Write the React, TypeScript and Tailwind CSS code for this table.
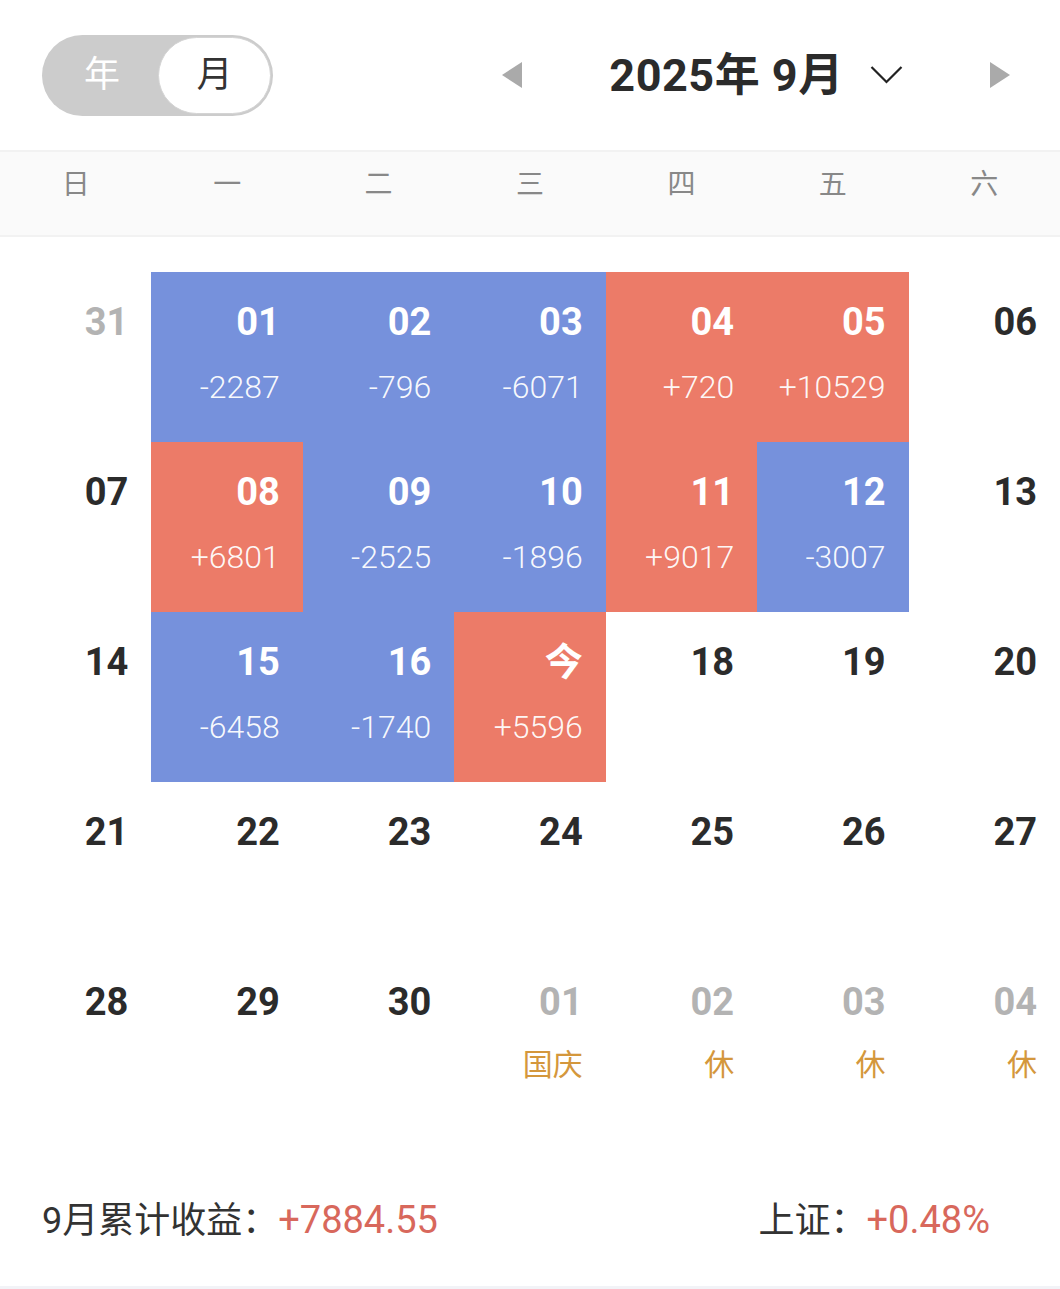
import clsx from 'clsx';

type Cell = {
  day: string;
  tone?: 'up' | 'down';
  amount?: string;
  muted?: boolean;
  holiday?: string;
};

const weeks: Cell[][] = [
  [
    { day: '31', muted: true },
    { day: '01', tone: 'down', amount: '-2287' },
    { day: '02', tone: 'down', amount: '-796' },
    { day: '03', tone: 'down', amount: '-6071' },
    { day: '04', tone: 'up', amount: '+720' },
    { day: '05', tone: 'up', amount: '+10529' },
    { day: '06' },
  ],
  [
    { day: '07' },
    { day: '08', tone: 'up', amount: '+6801' },
    { day: '09', tone: 'down', amount: '-2525' },
    { day: '10', tone: 'down', amount: '-1896' },
    { day: '11', tone: 'up', amount: '+9017' },
    { day: '12', tone: 'down', amount: '-3007' },
    { day: '13' },
  ],
  [
    { day: '14' },
    { day: '15', tone: 'down', amount: '-6458' },
    { day: '16', tone: 'down', amount: '-1740' },
    { day: '今', tone: 'up', amount: '+5596' },
    { day: '18' },
    { day: '19' },
    { day: '20' },
  ],
  [
    { day: '21' },
    { day: '22' },
    { day: '23' },
    { day: '24' },
    { day: '25' },
    { day: '26' },
    { day: '27' },
  ],
  [
    { day: '28' },
    { day: '29' },
    { day: '30' },
    { day: '01', muted: true, holiday: '国庆' },
    { day: '02', muted: true, holiday: '休' },
    { day: '03', muted: true, holiday: '休' },
    { day: '04', muted: true, holiday: '休' },
  ],
];

const weekdays = ['日', '一', '二', '三', '四', '五', '六'];

const DayCell = ({ cell }: { cell: Cell }) => (
  <div
    className={clsx(
      'h-[170px] flex flex-col items-end pr-[23px] pt-[31px]',
      cell.tone === 'up' && 'bg-[#ec7b68] text-white',
      cell.tone === 'down' && 'bg-[#7691dc] text-white',
      !cell.tone && (cell.muted ? 'text-[#b3b3b3]' : 'text-[#2b2b2b]')
    )}
  >
    <span className="text-[38px] leading-[38px] font-bold">{cell.day}</span>
    {cell.amount && (
      <span className="mt-[30px] text-[32px] leading-[32px] font-light text-white/95">{cell.amount}</span>
    )}
    {cell.holiday && (
      <span className="mt-[29px] text-[30px] leading-[30px] text-[#d4973c]">{cell.holiday}</span>
    )}
  </div>
);

export default function App() {
  return (
    <div className="w-[1060px] bg-white font-['Roboto','Noto_Sans_CJK_SC',sans-serif]">
      {/* Top bar: year/month toggle + month switcher */}
      <div className="h-[150px] flex items-center pl-[42px] pr-[50px]">
        <div className="w-[231px] h-[81px] rounded-full bg-[#cccccc] flex items-center p-[2px]">
          <span className="flex-1 text-center text-[36px] text-white pl-[2px]">年</span>
          <span className="w-[113px] h-[77px] rounded-full bg-white border border-[#d4d4d4] flex items-center justify-center text-[36px] text-[#333]">
            月
          </span>
        </div>

        <div className="ml-auto w-[508px] flex items-center justify-between">
          <svg width="20" height="26" viewBox="0 0 20 26">
            <polygon points="20,0 20,26 0,13" fill="#aaaaaa" />
          </svg>
          <div className="flex items-center">
            <span className="text-[45px] leading-none font-bold text-[#2b2b2b] tracking-[0.5px]">2025年 9月</span>
            <svg className="ml-[26px]" width="33" height="20" viewBox="0 0 33 20">
              <polyline points="1.5,2 16.5,17 31.5,2" fill="none" stroke="#222" strokeWidth="2.2" />
            </svg>
          </div>
          <svg width="20" height="26" viewBox="0 0 20 26">
            <polygon points="0,0 0,26 20,13" fill="#aaaaaa" />
          </svg>
        </div>
      </div>

      {/* Weekday header */}
      <div className="h-[87px] grid grid-cols-7 items-start pt-[19px] bg-[#fafafa] border-y-2 border-[#f2f2f2]">
        {weekdays.map((w) => (
          <span key={w} className="text-center text-[28px] leading-[28px] text-[#888]">
            {w}
          </span>
        ))}
      </div>

      {/* Calendar grid */}
      <div className="mt-[35px] grid grid-cols-7">
        {weeks.flat().map((cell, i) => (
          <DayCell key={i} cell={cell} />
        ))}
      </div>

      {/* Footer summary */}
      <div className="h-[164px] pt-[80px] pl-[42px] pr-[70px] flex items-start justify-between">
        <div className="text-[36px] leading-[36px] text-[#333]">
          9月累计收益：<span className="text-[38px] text-[#d8685c]">+7884.55</span>
        </div>
        <div className="text-[36px] leading-[36px] text-[#333]">
          上证：<span className="text-[38px] text-[#d8685c]">+0.48%</span>
        </div>
      </div>
      <div className="h-[3px] bg-[#f2f3f7]" />
    </div>
  );
}
